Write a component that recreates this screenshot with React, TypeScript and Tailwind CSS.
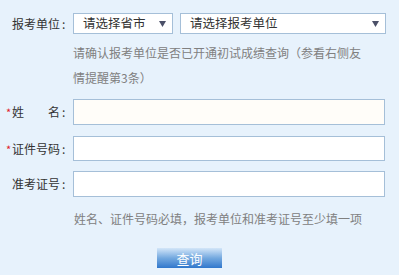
import React from "react";

const Arrow = () => (
  <svg width="7" height="6" viewBox="0 0 7 6" className="shrink-0">
    <path d="M0 0 H7 L3.5 6 Z" fill="#4b5068" />
  </svg>
);

const Select = ({ text, w }: { text: string; w: string }) => (
  <div
    className={`${w} h-[21px] bg-white border border-[#a5bfd8] flex items-center justify-between pl-[9px] pr-[6px] text-[12.5px] text-[#333]`}
  >
    <span className="leading-none">{text}</span>
    <Arrow />
  </div>
);

const Label = ({ children, star }: { children: React.ReactNode; star?: boolean }) => (
  <div className="w-[73px] shrink-0 pl-[12px] text-[12px] text-[#333] leading-none relative flex items-center whitespace-nowrap">
    {star && <span className="absolute left-[6px] top-[1px] text-[#e0202a] text-[11px]">*</span>}
    {children}
    <span className="ml-[2px]">:</span>
  </div>
);

export default function App() {
  return (
    <div
      className="w-[399px] h-[275px] bg-[#e7f2fc] pt-[13px] overflow-hidden"
      style={{ fontFamily: '"Noto Sans CJK SC", "Noto Sans", sans-serif' }}
    >
      <div className="flex items-center">
        <Label>报考单位</Label>
        <div className="flex gap-[7px]">
          <Select text="请选择省市" w="w-[100px]" />
          <Select text="请选择报考单位" w="w-[206px]" />
        </div>
      </div>
      <div className="pl-[73px] pr-[20px] mt-[6px] text-[12px] leading-[25px] text-[#808080]">
        请确认报考单位是否已开通初试成绩查询（参看右侧友
        <br />
        情提醒第3条）
      </div>
      <div className="flex items-center mt-[9px]">
        <Label star>
          <span className="flex justify-between w-[48px]">
            <span>姓</span>
            <span>名</span>
          </span>
        </Label>
        <div className="w-[312px] h-[26px] bg-[#fffdf9] border border-[#a5bfd8]" />
      </div>
      <div className="flex items-center mt-[11px]">
        <Label star>证件号码</Label>
        <div className="w-[312px] h-[25px] bg-white border border-[#a5bfd8]" />
      </div>
      <div className="flex items-center mt-[10px]">
        <Label>准考证号</Label>
        <div className="w-[312px] h-[26px] bg-white border border-[#a5bfd8]" />
      </div>
      <div className="pl-[74px] mt-[12px] text-[12px] leading-[20px] text-[#808080]">
        姓名、证件号码必填，报考单位和准考证号至少填一项
      </div>
      <div className="pl-[157px] mt-[19px]">
        <button className="w-[65px] h-[20px] bg-gradient-to-b from-[#d3e6f8] via-[#74a9df] to-[#2f77cc] text-white text-[13px] leading-none flex items-center justify-center">
          查询
        </button>
      </div>
    </div>
  );
}
